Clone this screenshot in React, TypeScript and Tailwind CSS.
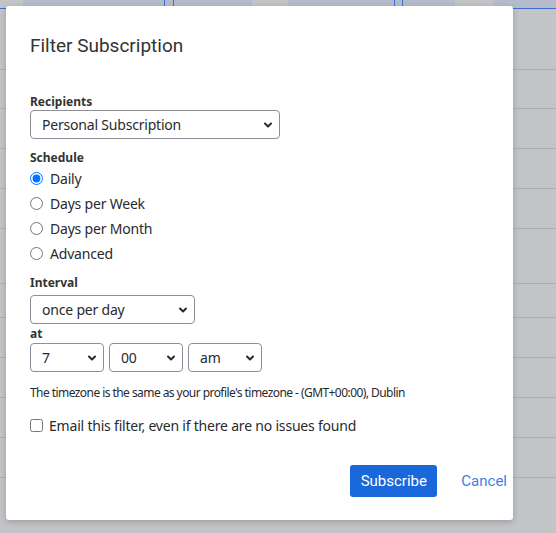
import { ChevronDown } from 'lucide-react'

const rowLines = [69, 108, 148, 188, 228, 283, 317, 357, 397, 437, 477]

function Select({ value, width }: { value: string; width: string }) {
  return (
    <div
      className={`${width} relative flex h-[29px] items-center rounded-[4px] border border-[#8c8f97] bg-white pl-[11px] text-[14px] tracking-[-0.2px] text-[#292a2e]`}
    >
      <span>{value}</span>
      <ChevronDown
        size={12}
        strokeWidth={4}
        className="absolute right-[5px] top-[8px] text-[#292a2e]"
      />
    </div>
  )
}

function Radio({ label, checked }: { label: string; checked?: boolean }) {
  return (
    <label className="flex h-[25px] items-center gap-[7px] text-[14px] tracking-[-0.2px] text-[#292a2e]">
      <input
        type="radio"
        name="schedule"
        defaultChecked={checked}
        className="m-0 h-[13px] w-[13px]"
      />
      {label}
    </label>
  )
}

export default function App() {
  return (
    <div
      className="relative h-[533px] w-[556px] overflow-hidden bg-[#c3c4c7]"
      style={{ fontFamily: '"Noto Sans", sans-serif' }}
    >
      {/* page behind the dialog */}
      <div className="flex h-[9px] border-b border-[#3d6fd1]">
        <div className="w-[23px] bg-[#c3c4c7]" />
        <div className="w-[142px] border-r border-[#3d6fd1] bg-[#b4bccb]" />
        <div className="w-[9px] border-r border-[#3d6fd1] bg-[#b4bccb]" />
        <div className="w-[78px] bg-[#b4bccb]" />
        <div className="w-[36px] bg-[#c3c4c7]" />
        <div className="w-[107px] border-r border-[#3d6fd1] bg-[#b4bccb]" />
        <div className="w-[8px] border-r border-[#3d6fd1] bg-[#b4bccb]" />
        <div className="w-[52px] bg-[#b4bccb]" />
        <div className="w-[38px] bg-[#c3c4c7]" />
        <div className="flex-1 bg-[#b4bccb]" />
      </div>
      {rowLines.map((y) => (
        <div
          key={y}
          className="absolute left-0 right-0 h-px bg-[#adaeb2]"
          style={{ top: y }}
        />
      ))}

      {/* dialog */}
      <div className="absolute left-[6px] top-[6px] flex h-[514px] w-[507px] flex-col rounded-[3px] bg-white px-[24px] shadow-[0_2px_6px_rgba(0,0,0,0.2)]">
        <h2
          className="mt-[26px] text-[19px] leading-[28px] text-[#333]"
          style={{ fontFamily: 'Roboto, sans-serif' }}
        >
          Filter Subscription
        </h2>

        <div className="mt-[34px] text-[12px] font-bold leading-[16px] text-[#333]">
          Recipients
        </div>
        <div>
          <Select value="Personal Subscription" width="w-[250px]" />
        </div>

        <div className="mt-[11px] text-[12px] font-bold leading-[16px] text-[#333]">
          Schedule
        </div>
        <div className="flex flex-col">
          <Radio label="Daily" checked />
          <Radio label="Days per Week" />
          <Radio label="Days per Month" />
          <Radio label="Advanced" />
        </div>

        <div className="mt-[9px] text-[12px] font-bold leading-[16px] text-[#333]">
          Interval
        </div>
        <div className="mt-[4px]">
          <Select value="once per day" width="w-[165px]" />
        </div>
        <div className="mt-[2px] text-[12px] font-bold leading-[16px] text-[#333]">at</div>
        <div className="mt-[1px] flex gap-[5px]">
          <Select value="7" width="w-[74px]" />
          <Select value="00" width="w-[74px]" />
          <Select value="am" width="w-[74px]" />
        </div>

        <p className="mt-[13px] text-[12px] leading-[16px] tracking-[-0.56px] text-[#292a2e]">
          The timezone is the same as your profile's timezone - (GMT+00:00), Dublin
        </p>

        <label className="mt-[14px] flex items-center gap-[6px] text-[14px] tracking-[-0.2px] text-[#292a2e]">
          <input type="checkbox" className="m-0 h-[13px] w-[13px]" />
          Email this filter, even if there are no issues found
        </label>

        <div
          className="-mr-[18px] mb-[23px] mt-auto flex items-center justify-end gap-[24px] text-[15px]"
          style={{ fontFamily: 'Roboto, sans-serif' }}
        >
          <button className="h-[32px] w-[87px] rounded-[3px] bg-[#1868db] text-white">
            Subscribe
          </button>
          <button className="h-[32px] text-[#3f7fe6]">Cancel</button>
        </div>
      </div>
    </div>
  )
}
